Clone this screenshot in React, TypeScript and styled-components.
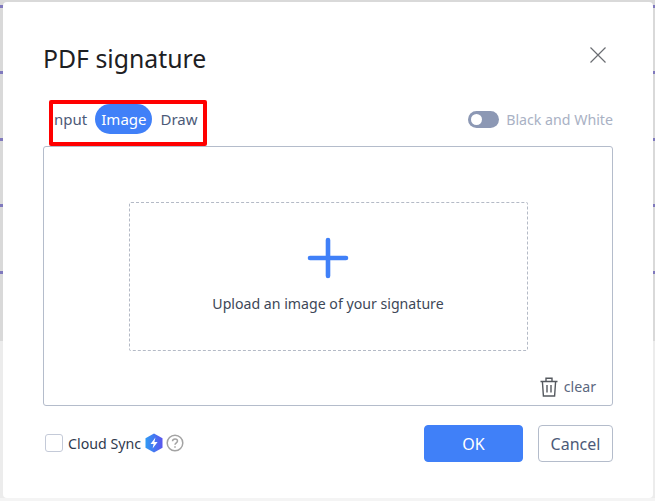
import React from "react";
import styled, { createGlobalStyle } from "styled-components";

const Global = createGlobalStyle`
  html, body { margin: 0; padding: 0; }
  body { font-family: "Noto Sans", "Open Sans", sans-serif; }
  * { box-sizing: border-box; }
`;

const Backdrop = styled.div`
  width: 655px;
  height: 501px;
  overflow: hidden;
  padding: 2px 2px 3px 3px;
  background:
    linear-gradient(#0000 335px, #d9d9d9 335px, #d9d9d9 341px, #ececec 341px, #ececec 498px, #f4f4f4 498px),
    repeating-linear-gradient(#d9d9d9 0, #d9d9d9 5px, #8079bd 5px, #8079bd 8px, #d9d9d9 8px, #d9d9d9 66.5px);
`;

const Dialog = styled.div`
  width: 650px;
  height: 496px;
  background: #fff;
  border-radius: 4px;
  padding: 0 40px 0 40px;
  display: flex;
  flex-direction: column;
`;

const Header = styled.div`
  height: 98px;
  display: flex;
  align-items: flex-start;
  justify-content: space-between;
`;

const Title = styled.h1`
  margin: 38px 0 0;
  font-size: 24.8px;
  line-height: 36px;
  font-weight: 400;
  color: #1d2023;
`;

const Close = styled.button`
  margin: 45px 7px 0 0;
  width: 16px;
  height: 16px;
  padding: 0;
  border: 0;
  background: none;
  color: #6a6d72;
  display: flex;
`;

const Controls = styled.div`
  position: relative;
  height: 46px;
  display: flex;
  justify-content: space-between;
  align-items: flex-start;
`;

const Tabs = styled.div`
  width: 155px;
  margin: 4px 0 0 11px;
  height: 30px;
  overflow: hidden;
  display: flex;
  align-items: center;
`;

const Tab = styled.div<{ $active?: boolean; $clip?: number }>`
  flex: none;
  height: 30px;
  line-height: 30px;
  padding: 0 ${(p) => (p.$active ? 6 : 8)}px;
  margin-left: ${(p) => p.$clip ?? 0}px;
  border-radius: 15px;
  font-size: 15px;
  color: ${(p) => (p.$active ? "#fff" : "#4c5a78")};
  background: ${(p) => (p.$active ? "#4080f8" : "transparent")};
`;

const Highlight = styled.div`
  position: absolute;
  left: 6px;
  top: 0;
  width: 158px;
  height: 46px;
  border: 4px solid #ff0000;
  border-radius: 2px;
  pointer-events: none;
`;

const ToggleRow = styled.div`
  margin-top: 8px;
  display: flex;
  align-items: center;
  gap: 7px;
  height: 22px;
  font-size: 14.2px;
  color: #a9b1c4;
`;

const Toggle = styled.div`
  width: 31px;
  height: 17px;
  border-radius: 9px;
  background: #8c98b4;
  padding: 3px;
`;

const Knob = styled.div`
  width: 11px;
  height: 11px;
  border-radius: 50%;
  background: #fff;
`;

const Panel = styled.div`
  height: 260px;
  border: 1px solid #b4bccb;
  border-radius: 3px;
  display: flex;
  flex-direction: column;
  align-items: center;
  padding-top: 55px;
`;

const Drop = styled.div`
  width: 399px;
  height: 149px;
  border: 1px dashed #b4bac6;
  border-radius: 2px;
  display: flex;
  flex-direction: column;
  align-items: center;
  padding-top: 34px;
`;

const Plus = styled.svg`
  width: 42px;
  height: 42px;
  display: block;
`;

const DropText = styled.div`
  margin-top: 14px;
  font-size: 14.15px;
  line-height: 22px;
  color: #3d4757;
`;

const ClearRow = styled.div`
  align-self: flex-end;
  margin: 25px 16px 0 0;
  display: flex;
  align-items: center;
  gap: 6px;
  font-size: 14.2px;
  line-height: 22px;
  color: #5b6780;
`;

const Footer = styled.div`
  margin-top: 19px;
  height: 37px;
  display: flex;
  align-items: center;
`;

const Checkbox = styled.div`
  width: 18px;
  height: 18px;
  margin: -2px 5px 0 2px;
  border: 1px solid #c4cad8;
  border-radius: 3px;
`;

const SyncLabel = styled.div`
  font-size: 14.2px;
  color: #2f3a4e;
  margin-top: -1px;
`;

const Badge = styled.svg`
  width: 18px;
  height: 20px;
  margin: -2px 0 0 4px;
`;

const Help = styled.svg`
  width: 18px;
  height: 18px;
  margin: -2px 0 0 3px;
`;

const Spacer = styled.div`
  flex: 1;
`;

const Button = styled.button<{ $primary?: boolean }>`
  height: 37px;
  width: ${(p) => (p.$primary ? 99 : 75)}px;
  margin-left: ${(p) => (p.$primary ? 0 : 15)}px;
  padding: 0;
  font-family: inherit;
  font-size: 16px;
  border-radius: 4px;
  border: 1px solid ${(p) => (p.$primary ? "#4080f8" : "#b4bccb")};
  background: ${(p) => (p.$primary ? "#4080f8" : "#fff")};
  color: ${(p) => (p.$primary ? "#fff" : "#4c5a78")};
`;

export default function App() {
  return (
    <Backdrop>
      <Global />
      <Dialog>
        <Header>
          <Title>PDF signature</Title>
          <Close aria-label="close">
            <svg width="16" height="16" viewBox="0 0 16 16" fill="none" stroke="currentColor" strokeWidth="1.2">
              <path d="M0.5 0.5 15.5 15.5M15.5 0.5 0.5 15.5" />
            </svg>
          </Close>
        </Header>
        <Controls>
          <Tabs>
            <Tab $clip={-13}>Input</Tab>
            <Tab $active>Image</Tab>
            <Tab>Draw</Tab>
          </Tabs>
          <Highlight />
          <ToggleRow>
            <Toggle>
              <Knob />
            </Toggle>
            Black and White
          </ToggleRow>
        </Controls>
        <Panel>
          <Drop>
            <Plus viewBox="0 0 42 42" fill="none" stroke="#4080f8" strokeWidth="4.6" strokeLinecap="round">
              <path d="M21 3V39M3 21H39" />
            </Plus>
            <DropText>Upload an image of your signature</DropText>
          </Drop>
          <ClearRow>
            <svg width="18" height="20" viewBox="0 0 18 20" fill="none" stroke="#55595f" strokeWidth="1.4">
              <path d="M0.5 4.5H17.5M6 4V1.2H12V4M2.4 4.5 3.4 19H14.6L15.6 4.5M7 8V15.5M11 8V15.5" />
            </svg>
            clear
          </ClearRow>
        </Panel>
        <Footer>
          <Checkbox />
          <SyncLabel>Cloud Sync</SyncLabel>
          <Badge viewBox="0 0 18 20">
            <defs>
              <linearGradient id="badge" x1="0" y1="0" x2="1" y2="0">
                <stop offset="0" stopColor="#2f9bf4" />
                <stop offset="1" stopColor="#5a55ee" />
              </linearGradient>
            </defs>
            <path d="M9 0.5 17.5 5.2V14.8L9 19.5 0.5 14.8V5.2Z" fill="url(#badge)" />
            <path d="M10.4 4.5 5.5 11H8.6L7.6 15.5 12.6 9H9.4Z" fill="#fff" />
          </Badge>
          <Help viewBox="0 0 18 18" fill="none" stroke="#a3a3a3" strokeWidth="1.5">
            <circle cx="9" cy="9" r="7.8" />
            <path d="M6.5 7.2C6.5 5.7 7.6 4.9 9 4.9S11.5 5.8 11.5 7.1C11.5 8.7 9 9 9 10.8" />
            <path d="M9 12.2V13.8" />
          </Help>
          <Spacer />
          <Button $primary>OK</Button>
          <Button>Cancel</Button>
        </Footer>
      </Dialog>
    </Backdrop>
  );
}
